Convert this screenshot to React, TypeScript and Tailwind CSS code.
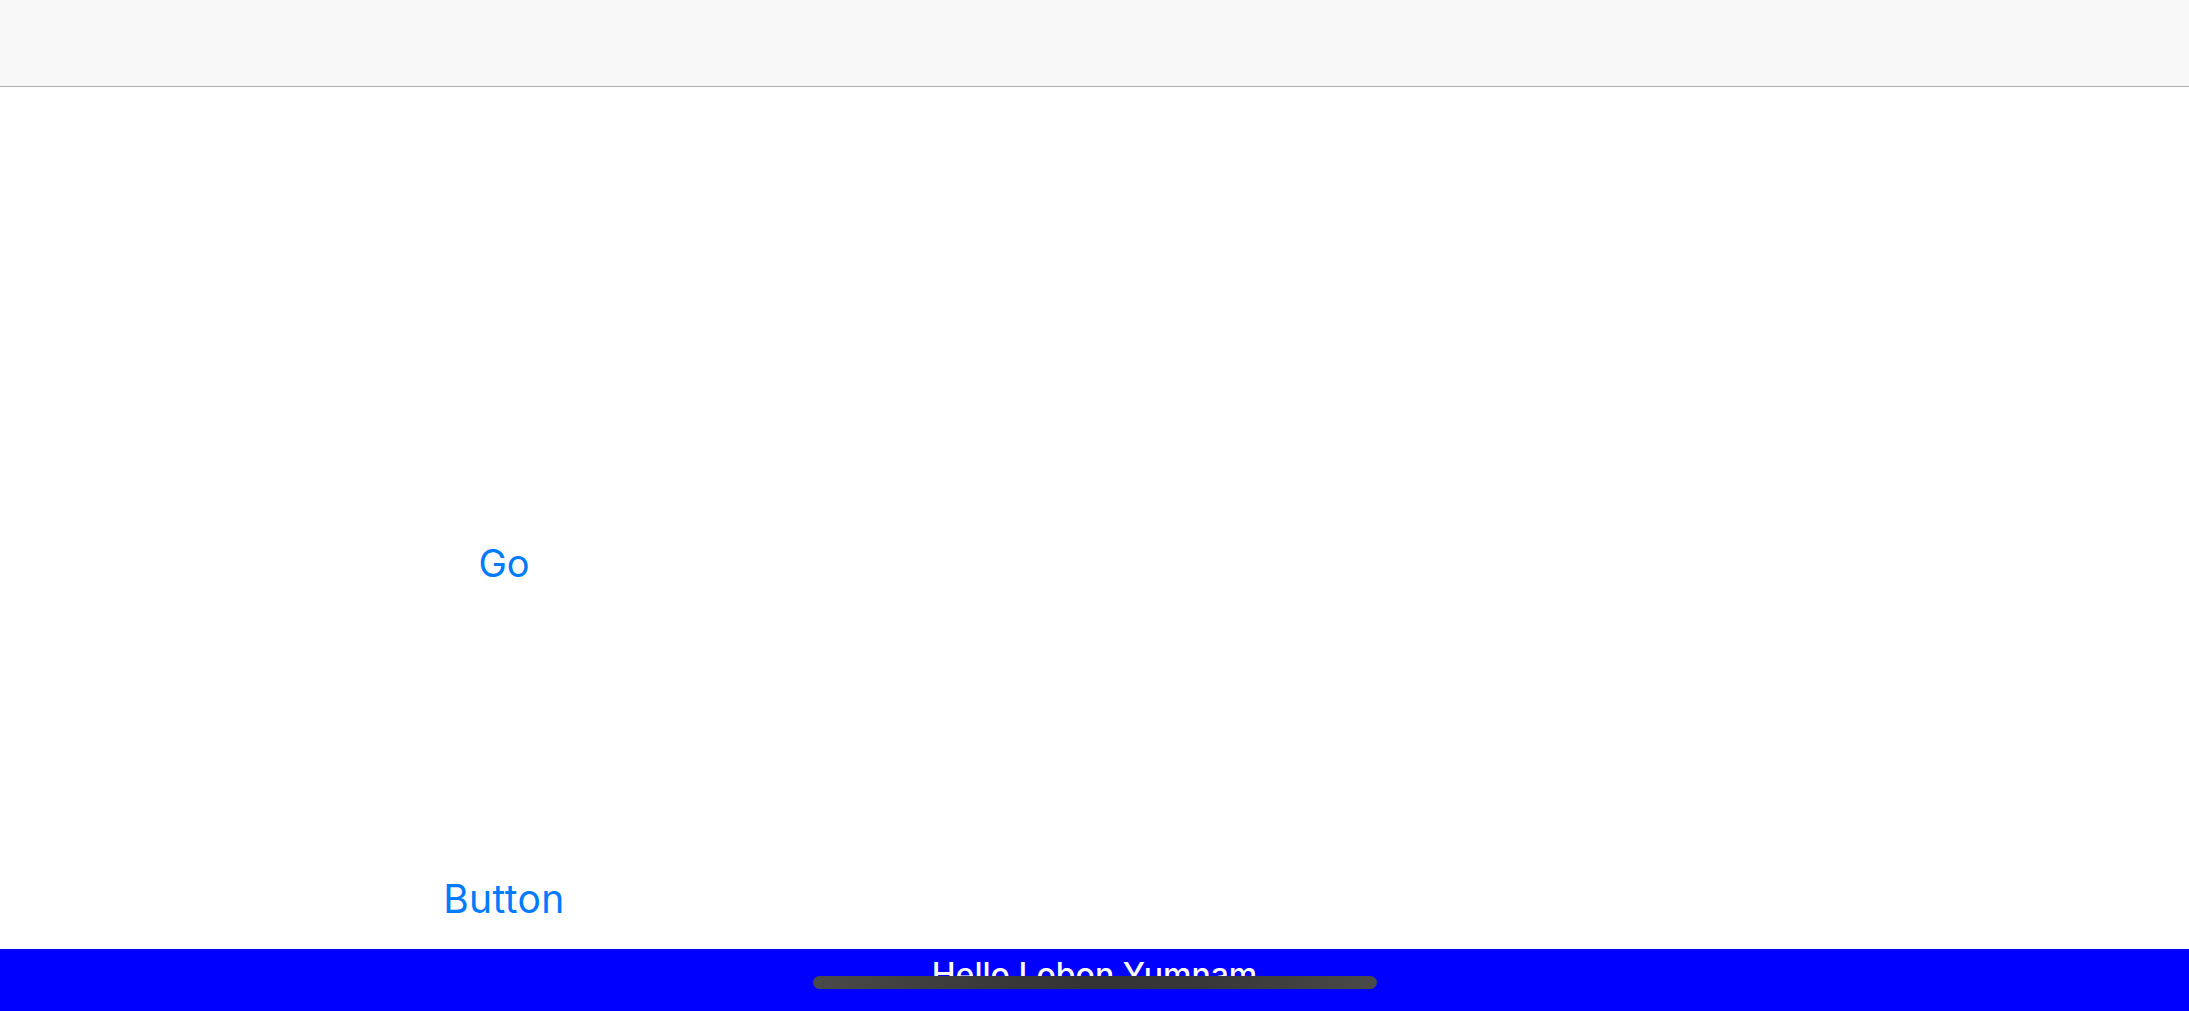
export default function App() {
  return (
    <div className="relative flex h-[1011px] w-[2189px] flex-col overflow-hidden bg-white font-['Inter','Liberation_Sans',sans-serif]">
      <header className="h-[87px] shrink-0 border-b border-[#b2b2b2] bg-[#f8f8f8]" />

      <main className="flex flex-1 flex-col">
        <div className="w-[1008px] pt-[457px] text-center">
          <button type="button" className="text-[38px] leading-[38px] text-[#007aff]">
            Go
          </button>
        </div>
        <div className="w-[1008px] pt-[297px] text-center">
          <button type="button" className="text-[39px] leading-[38px] tracking-[0.4px] text-[#007aff]">
            Button
          </button>
        </div>
      </main>

      <footer className="h-[62px] shrink-0 bg-[#0000ff]">
        <p className="pt-[10px] text-center text-[32px] font-medium leading-[32px] text-white">
          Hello Lobon Yumnam
        </p>
      </footer>

      {/* home indicator */}
      <div className="absolute left-[813px] top-[976px] h-[13px] w-[564px] rounded-full bg-[linear-gradient(90deg,#4a4a4a_0%,#3c3c3c_25%,#333333_50%,#3a3a3a_75%,#4a4a4a_100%)]" />
    </div>
  );
}
